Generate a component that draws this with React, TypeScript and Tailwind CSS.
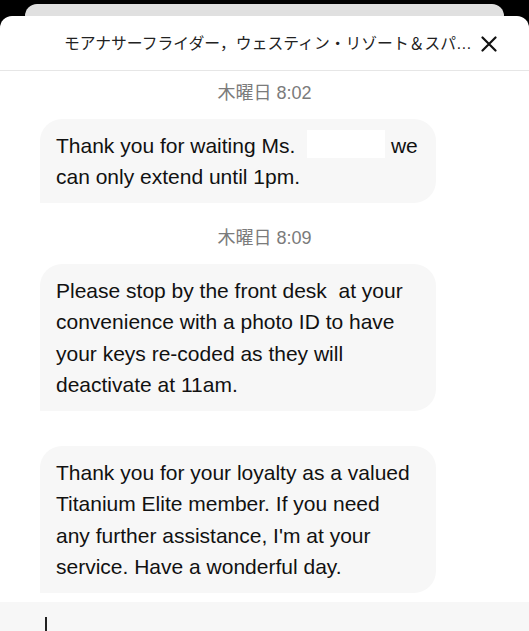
import React from 'react'

const font = { fontFamily: '"Liberation Sans", "Noto Sans CJK JP", Arial, sans-serif' }

function Stamp({ text }: { text: string }) {
  return (
    <div className="flex justify-center text-[18px] leading-[22px] text-[#7b7b7b]">
      {text}
    </div>
  )
}

function Bubble({ children, wide }: { children: React.ReactNode; wide?: boolean }) {
  return (
    <div
      className={
        'ml-10 w-[396px] rounded-[22px] rounded-bl-none bg-[#f7f7f7] py-[10.5px] pl-4 text-[21px] leading-[31.5px] text-[#111] ' +
        (wide ? 'pr-3' : 'pr-[22px]')
      }
    >
      {children}
    </div>
  )
}

export default function App() {
  return (
    <div className="h-[631px] w-[529px] overflow-hidden bg-black" style={font}>
      {/* card behind the sheet */}
      <div className="mx-[25px] mt-1 h-6 rounded-t-xl bg-[#e0e0e0]" />

      {/* sheet */}
      <div className="-mt-3 flex h-[615px] flex-col rounded-t-xl bg-white">
        {/* header */}
        <div className="flex h-[55px] shrink-0 items-center border-b border-[#e6e6e6] pl-16 pr-8">
          <div className="flex-1 whitespace-nowrap pt-[2px] text-[15.8px] text-[#222]">
            モアナサーフライダー，ウェスティン・リゾート＆スパ…
          </div>
          <svg width="16" height="16" viewBox="0 0 16 16" className="ml-2 mt-[2px]">
            <path d="M1.5 1.5 L14.5 14.5 M14.5 1.5 L1.5 14.5" stroke="#111" strokeWidth="2.2" strokeLinecap="round" />
          </svg>
        </div>

        <div className="flex flex-1 flex-col">
          <div className="mt-[11px]">
            <Stamp text="木曜日 8:02" />
          </div>
          <div className="mt-[15px]">
            <Bubble wide>
              Thank you for waiting Ms.{' '}
              <span className="ml-[6px] inline-block h-[28px] w-[78px] bg-white align-[-5px]" />{' '}
              we can only extend until 1pm.
            </Bubble>
          </div>

          <div className="mt-[24px]">
            <Stamp text="木曜日 8:09" />
          </div>
          <div className="mt-[15px]">
            <Bubble>
              Please stop by the front desk&nbsp; at your convenience with a photo ID to have your keys re-coded as they will deactivate at 11am.
            </Bubble>
          </div>

          <div className="mt-[35px]">
            <Bubble>
              Thank you for your loyalty as a valued Titanium Elite member. If you need any further assistance, I'm at your service. Have a wonderful day.
            </Bubble>
          </div>

          {/* input bar */}
          <div className="mt-[9px] flex-1 bg-[#f7f7f7] pl-[45px] pt-[15px]">
            <div className="h-[16px] w-[2px] bg-[#222]" />
          </div>
        </div>
      </div>
    </div>
  )
}
